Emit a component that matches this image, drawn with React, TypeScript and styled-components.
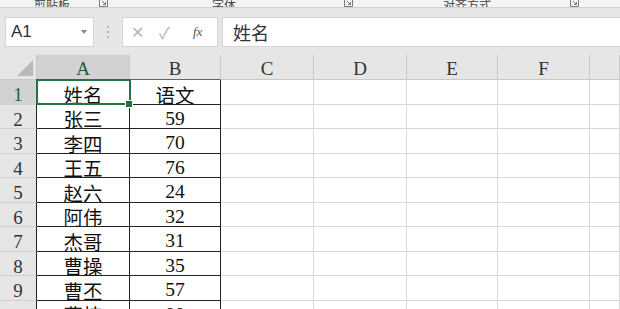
import React from 'react'
import styled, { createGlobalStyle, css } from 'styled-components'

const GlobalStyle = createGlobalStyle`
  html, body {
    margin: 0;
    padding: 0;
    background: #e6e6e6;
    overflow: hidden;
  }
  * { box-sizing: border-box; }
`

const Page = styled.div`
  width: 620px;
  height: 309px;
  overflow: hidden;
  font-family: "Liberation Sans", "Noto Sans CJK SC", sans-serif;
`

const Ribbon = styled.div`
  height: 8px;
  background: #f3f3f3;
  border-bottom: 1px solid #d2d2d2;
  overflow: hidden;
  display: grid;
  grid-template-columns: 104px 245px 226px 45px;
`

const RibbonGroup = styled.div`
  display: flex;
  align-items: flex-end;
  justify-content: space-between;
  height: 7px;
`

const RibbonLabel = styled.span<{ $offset: number }>`
  margin-left: ${p => p.$offset}px;
  margin-bottom: -4px;
  font-size: 12px;
  line-height: 12px;
  color: #444;
  font-family: "Noto Sans CJK SC", sans-serif;
`

const Launcher = styled.svg`
  margin-right: -4px;
`

const FormulaBar = styled.div`
  height: 47px;
  display: flex;
  align-items: flex-start;
  padding: 9px 0 0 5px;
`

const NameBox = styled.div`
  width: 89px;
  height: 30px;
  background: #fff;
  border: 1px solid #d6d6d6;
  display: flex;
  align-items: center;
  justify-content: space-between;
  padding: 0 6px 0 5px;
  font-size: 17px;
  color: #333;
`

const Caret = styled.span`
  width: 0;
  height: 0;
  border-left: 3px solid transparent;
  border-right: 3px solid transparent;
  border-top: 4px solid #8a8a8a;
`

const Dots = styled.div`
  width: 28px;
  height: 30px;
  display: flex;
  flex-direction: column;
  align-items: center;
  justify-content: center;
  gap: 3px;
  & span {
    width: 2px;
    height: 2px;
    background: #b4b4b4;
  }
`

const ButtonBox = styled.div`
  width: 96px;
  height: 30px;
  background: #fff;
  border: 1px solid #d6d6d6;
  display: grid;
  grid-template-columns: 28px 26px 1fr;
  align-items: center;
  padding-left: 8px;
  color: #b4b4b4;
  font-size: 16px;
`

const FxGlyph = styled.span`
  font-family: "Liberation Serif", serif;
  font-style: italic;
  font-size: 13px;
  color: #555;
  padding-left: 8px;
`

const FormulaInput = styled.div`
  flex: 1;
  margin-left: 4px;
  height: 30px;
  background: #fff;
  border: 1px solid #d6d6d6;
  border-right: none;
  display: flex;
  align-items: center;
  padding-left: 10px;
  font-family: "Noto Sans CJK SC", sans-serif;
  font-size: 18px;
  color: #333;
`

// row header, A..F; G takes the rest
const colWidths = [37, 93, 91, 93, 93, 91, 92]
const rowHeights = [25, 24, 25, 24, 25, 24, 25, 24, 25, 24]

const Sheet = styled.div`
  display: grid;
  grid-template-columns: ${colWidths.map(w => `${w}px`).join(' ')} 1fr;
  grid-template-rows: 25px ${rowHeights.map(h => `${h}px`).join(' ')};
  background: #fff;
`

const headerFont = css`
  font-family: "Liberation Serif", "Noto Sans CJK SC", serif;
  font-size: 19px;
  display: flex;
  align-items: center;
  justify-content: center;
`

const Corner = styled.div`
  background: #e6e6e6;
  border-right: 1px solid #c8c8c8;
  border-bottom: 1px solid #c8c8c8;
  position: relative;
  &::after {
    content: '';
    position: absolute;
    right: 3px;
    bottom: 3px;
    width: 0;
    height: 0;
    border-left: 16px solid transparent;
    border-bottom: 16px solid #b9b9b9;
  }
`

const ColHeader = styled.div<{ $active?: boolean; $dark?: boolean }>`
  ${headerFont}
  padding-top: 4px;
  background: ${p => (p.$active ? '#d2d2d2' : '#e6e6e6')};
  color: ${p => (p.$active ? '#1e5e3a' : '#333')};
  border-right: 1px solid #c8c8c8;
  border-bottom: 1px solid ${p => (p.$dark ? '#666' : '#c8c8c8')};
`

const RowHeader = styled.div<{ $active?: boolean }>`
  ${headerFont}
  padding-top: 6px;
  background: ${p => (p.$active ? '#d2d2d2' : '#e6e6e6')};
  color: ${p => (p.$active ? '#1e5e3a' : '#333')};
  border-bottom: 1px solid #d0d0d0;
  border-right: 1px solid #222;
`

const Cell = styled.div<{ $data?: boolean; $selected?: boolean }>`
  position: relative;
  display: flex;
  align-items: center;
  justify-content: center;
  padding-top: 4px;
  font-family: "Liberation Serif", "Noto Sans CJK SC", serif;
  font-size: 19.5px;
  color: #111;
  border-right: 1px solid ${p => (p.$data ? '#222' : '#d8d8d8')};
  border-bottom: 1px solid ${p => (p.$data ? '#222' : '#d8d8d8')};
  ${p =>
    p.$selected &&
    css`
      &::after {
        content: '';
        position: absolute;
        left: -1px;
        top: -1px;
        right: -2px;
        bottom: -1px;
        border: 2px solid #217346;
      }
      &::before {
        content: '';
        position: absolute;
        right: -4px;
        bottom: -4px;
        width: 6px;
        height: 6px;
        background: #217346;
        border: 1px solid #fff;
        z-index: 2;
      }
    `}
`

const rows: [string, string][] = [
  ['姓名', '语文'],
  ['张三', '59'],
  ['李四', '70'],
  ['王五', '76'],
  ['赵六', '24'],
  ['阿伟', '32'],
  ['杰哥', '31'],
  ['曹操', '35'],
  ['曹丕', '57'],
  ['曹植', '88'],
]

const letters = ['A', 'B', 'C', 'D', 'E', 'F', '']
const emptyCols = ['C', 'D', 'E', 'F', 'G']

function LauncherIcon() {
  return (
    <Launcher width="9" height="7" viewBox="0 0 9 7">
      <path d="M0.5 0 V6.5 H8.5 V0" fill="none" stroke="#7a7a7a" strokeWidth="1" />
      <path d="M3 1 L6.5 4.5 M6.5 2 V4.5 H4" fill="none" stroke="#7a7a7a" strokeWidth="1" />
    </Launcher>
  )
}

export default function App() {
  return (
    <Page>
      <GlobalStyle />
      <Ribbon>
        <RibbonGroup>
          <RibbonLabel $offset={34}>剪贴板</RibbonLabel>
          <LauncherIcon />
        </RibbonGroup>
        <RibbonGroup>
          <RibbonLabel $offset={108}>字体</RibbonLabel>
          <LauncherIcon />
        </RibbonGroup>
        <RibbonGroup>
          <RibbonLabel $offset={94}>对齐方式</RibbonLabel>
          <LauncherIcon />
        </RibbonGroup>
        <RibbonGroup />
      </Ribbon>

      <FormulaBar>
        <NameBox>
          <span>A1</span>
          <Caret />
        </NameBox>
        <Dots>
          <span />
          <span />
          <span />
        </Dots>
        <ButtonBox>
          <span>✕</span>
          <span>✓</span>
          <FxGlyph>fx</FxGlyph>
        </ButtonBox>
        <FormulaInput>姓名</FormulaInput>
      </FormulaBar>

      <Sheet>
        <Corner />
        {letters.map((l, i) => (
          <ColHeader key={i} $active={i === 0} $dark={i < 2}>
            {l}
          </ColHeader>
        ))}
        {rows.map((r, ri) => (
          <React.Fragment key={ri}>
            <RowHeader $active={ri === 0}>{ri + 1}</RowHeader>
            <Cell $data $selected={ri === 0}>{r[0]}</Cell>
            <Cell $data>{r[1]}</Cell>
            {emptyCols.map(c => (
              <Cell key={c} />
            ))}
          </React.Fragment>
        ))}
      </Sheet>
    </Page>
  )
}
